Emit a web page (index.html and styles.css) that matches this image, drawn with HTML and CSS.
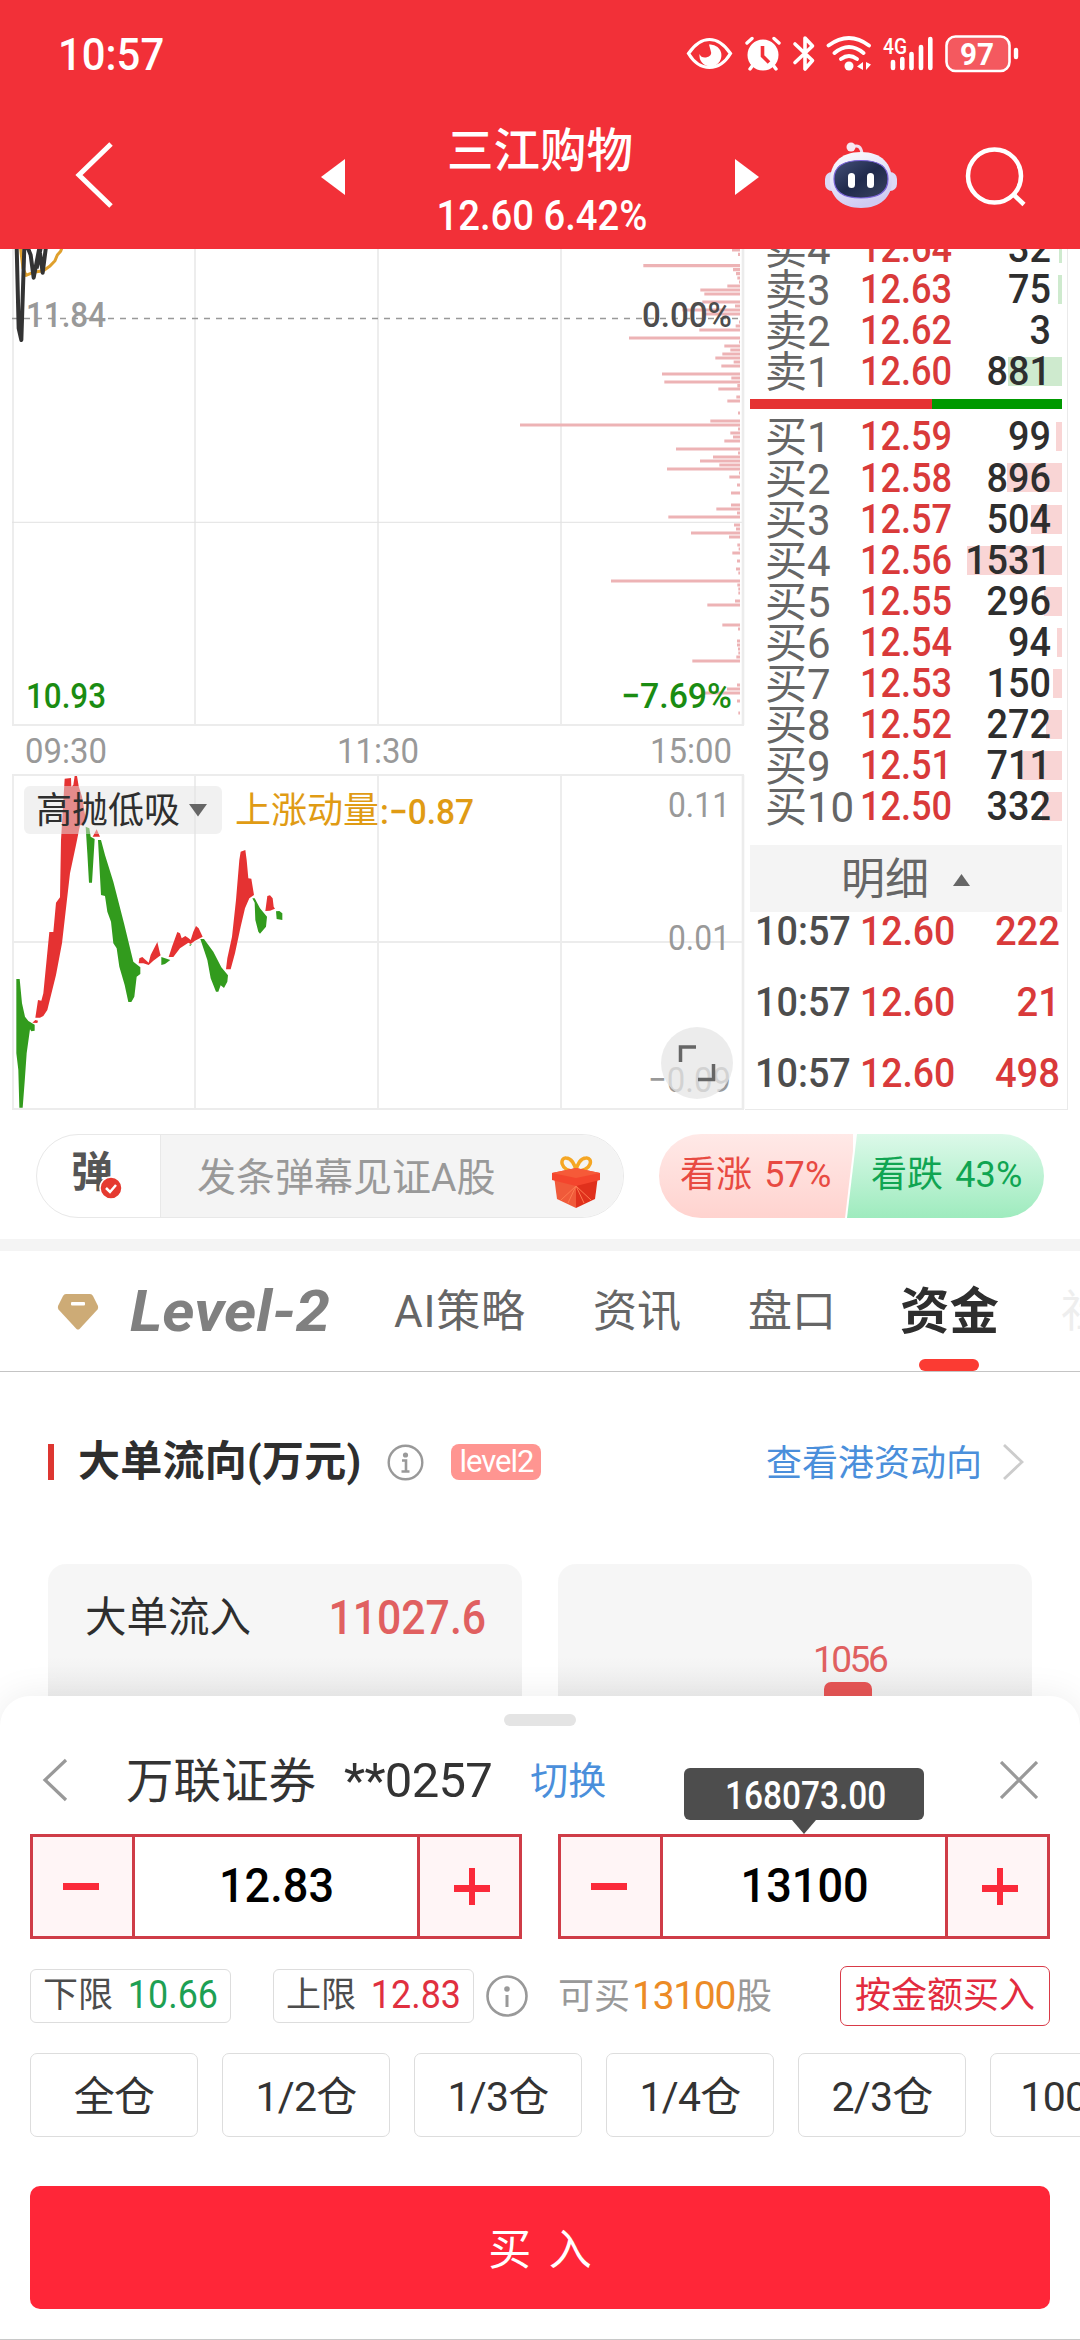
FILE: index.html
```html
<!DOCTYPE html>
<html lang="zh-CN">
<head>
<meta charset="utf-8">
<title>三江购物</title>
<link rel="stylesheet" href="styles.css">
</head>
<body>
<header class="header">
  <div class="status">
    <span class="clock">10:57</span>
    <svg class="status-icons" viewBox="684 30 340 46" width="340" height="46" fill="none" stroke="#fff">
      <path d="M688.500 53.500Q698 39.500 709.500 39.500T730.500 53.500Q722 67.500 709.500 67.500T688.500 53.500Z" stroke-width="3.200"/>
      <path d="M709 44.500A11 11 0 1 1 699.500 54Q701 58 706 57.500Q713 56 710.500 50Q709.500 46.500 709 44.500Z" fill="#fff" stroke="none"/>
      <circle cx="763" cy="55" r="15.500" fill="#fff" stroke="none"/>
      <path d="M747 43L752 38.500M779 43L774 38.500M753 65L750 69M773 65L776 69" stroke-width="3.400" stroke-linecap="round"/>
      <path d="M762.500 46V56L769 62.500" stroke="#f23038" stroke-width="3.600"/>
      <path d="M795 44L812.500 60.500L805 69V38L812.500 46L795 62.500" stroke-width="3.600" stroke-linecap="round" stroke-linejoin="round"/>
      <path d="M828.500 45.500Q849 30.500 869 45.500M834.500 53Q849 41 863.500 53M841 59Q849 53 857 59" stroke-width="3.800" stroke-linecap="round"/>
      <circle cx="849" cy="66" r="4.500" fill="#fff" stroke="none"/>
      <path d="M863 62V70L857 66.500ZM866 62V70L871 64.500Z" fill="#fff" stroke="none"/>
      <path d="M893 62V68M902.300 59V68M911.500 54V68M921 47V68M930.300 39V68" stroke-width="4.600" stroke-linecap="round"/>
      <rect x="946.500" y="36.500" width="63" height="34.500" rx="9" fill="#ffffff33" stroke-width="2.600"/>
      <path d="M1016 50V57" stroke-width="4.400" stroke-linecap="round"/>
      <g fill="#fff" stroke="none"><text x="883" y="54" font-size="22" font-weight="500" textLength="24" lengthAdjust="spacingAndGlyphs">4G</text>
      <text x="960" y="65" font-size="32" font-weight="700" textLength="34" lengthAdjust="spacingAndGlyphs">97</text></g>
    </svg>
  </div>
  <nav class="nav">
    <svg class="back" width="48" height="72" viewBox="0 0 48 72"><path d="M41 5L9 36L41 67" fill="none" stroke="#fff" stroke-width="5"/></svg>
    <svg class="prev" width="24" height="36" viewBox="0 0 24 36"><path d="M24 0V36L0 18Z" fill="#fff"/></svg>
    <div class="stock"><b class="name">三江购物</b><span class="quote">12.60 6.42%</span></div>
    <svg width="24" height="36" viewBox="0 0 24 36"><path d="M0 0V36L24 18Z" fill="#fff"/></svg>
    <svg class="robot" width="72" height="68" viewBox="0 0 72 68">
      <defs><linearGradient id="shell" x1="0" y1="0" x2=".4" y2="1"><stop offset="0" stop-color="#fff"/><stop offset="1" stop-color="#cfcbf2"/></linearGradient>
      <linearGradient id="visor" x1="0" y1="0" x2="1" y2="1"><stop offset="0" stop-color="#45517a"/><stop offset=".5" stop-color="#202a4c"/><stop offset="1" stop-color="#39435f"/></linearGradient></defs>
      <path d="M27 6Q36 2 37 13" fill="none" stroke="#f3dfee" stroke-width="3"/><circle cx="26" cy="6" r="4.500" fill="#f7e9f2"/>
      <rect x="0" y="31" width="72" height="19" rx="7" fill="#dcd9f6"/>
      <path d="M36 11C57 11 67 23 67 40C67 56 55 67 36 67S5 56 5 40C5 23 15 11 36 11Z" fill="url(#shell)"/>
      <path d="M36 19.500C55 19.500 63 26 63 38S55 57 36 57S9 50 9 38S17 19.500 36 19.500Z" fill="url(#visor)" stroke="#7a63d8" stroke-width="1.200"/>
      <rect x="23" y="32" width="7" height="15" rx="3.500" fill="#fff"/><rect x="42" y="32" width="7" height="15" rx="3.500" fill="#fff"/>
    </svg>
    <svg class="search" width="62" height="62" viewBox="0 0 62 62"><g fill="none" stroke="#fff" stroke-width="4.500"><circle cx="29.500" cy="29" r="26.500"/><path d="M48 47L59 57.500"/></g></svg>
  </nav>
</header>

<section class="market">
  <svg class="chart" width="745" height="863" viewBox="0 249 745 863">
    <g stroke="#ececec" stroke-width="1.800" fill="none">
      <path d="M13 249V725M195 249V725M378 249V725M561 249V725M12 725H744M13 775V1109M195 775V1109M378 775V1109M561 775V1109M12 775H744M12 942H744M12 1109H744"/>
      <path d="M12 522.300H744" stroke="#e2e2e2" stroke-width="1"/>
      <path d="M743 249V725M743 775V1109" stroke-width="2.600"/>
    </g>
    <path d="M12 318.500H740" stroke="#999" stroke-width="1.600" stroke-dasharray="6 6"/>
    <path transform="translate(500 240) scale(.33333)" stroke="#edb3b5" stroke-width="9.500" d="M696 30H720M714 43H720M430 77H720M699 89H720M708 101H720M712 114H720M717 126H720M682 138H720M601 150H720M613 162H720M607 186H720M705 198H720M547 210H720M613 222H720M717 246H720M707 258H720M598 270H720M387 294H720M717 306H720M673 318H720M691 330H720M667 342H720M646 354H720M701 366H720M664 378H720M486 402H720M694 414H720M493 426H720M712 437H720M655 447H720M709 471H720M682 483H720M714 519H720M631 543H720M60 555H720M714 567H720M691 579H720M699 591H720M673 603H720M528 627H720M714 639H720M639 651H720M600 663H720M658 675H720M501 687H720M717 699H720M688 711H720M711 735H720M693 759H720M693 795H720M649 807H720M711 819H720M505 831H720M702 855H720M708 867H720M573 879H720M687 891H720M712 915H720M716 927H720M697 939H720M711 963H720M708 987H720M715 999H720M333 1023H720M712 1035H720M715 1047H720M715 1059H720M705 1083H720M622 1095H720M667 1155H720M714 1167H720M711 1203H720M711 1215H720M714 1227H720M715 1239H720M709 1251H720M577 1263H720M711 1335H720M681 1347H720M606 1359H720M711 1383H720M715 1419H720"/>
    <g transform="translate(0 240) scale(.33333)" fill="none" stroke-width="9" stroke-linejoin="round">
      <path d="M61 20L69 85L78 106L100 97L130 92L150 78L165 62L172 45L182 34L187 20" stroke="#dfa02d"/>
      <path d="M50 20L56 265L64 300L73 20M82 20L92 45L101 113L118 24L128 98L138 20M110 85L122 24" stroke="#333" stroke-width="12"/>
    </g>
    <g class="axis">
      <text x="26" y="327" fill="#999" textLength="80" lengthAdjust="spacingAndGlyphs">11.84</text>
      <text x="642" y="327" fill="#4d4d4d" textLength="90" lengthAdjust="spacingAndGlyphs">0.00%</text>
      <text x="26" y="708" fill="#1a8c12" textLength="80" lengthAdjust="spacingAndGlyphs">10.93</text>
      <text x="621" y="708" fill="#1a8c12" textLength="111" lengthAdjust="spacingAndGlyphs">−7.69%</text>
      <text class="gray" x="25" y="763" textLength="82" lengthAdjust="spacingAndGlyphs">09:30</text>
      <text class="gray" x="337" y="763" textLength="82" lengthAdjust="spacingAndGlyphs">11:30</text>
      <text class="gray" x="650" y="763" textLength="82" lengthAdjust="spacingAndGlyphs">15:00</text>
      <text class="gray" x="668" y="817" textLength="62" lengthAdjust="spacingAndGlyphs">0.11</text>
      <text class="gray" x="668" y="950" textLength="62" lengthAdjust="spacingAndGlyphs">0.01</text>
      <text class="gray" x="648" y="1092" textLength="83" lengthAdjust="spacingAndGlyphs">−0.09</text>
    </g>
    <g transform="translate(0 720) scale(.33333)">
      <path fill="#e53232" d="M97 908L106 900L114 902L112 909ZM106 893L114 840L124 842L130 820L148 636L160 636L168 548L180 532L183 360L194 176L213 174L214 200L220 195L224 168L231 168L236 198L246 230L258 300L250 316L240 316L228 375L210 460L186 670L168 765L142 870L130 888L120 893ZM278 350L290 328L300 350ZM416 730L418 715L427 711L446 728L452 705L472 666L480 700L482 706L460 722L446 735L430 730ZM506 711L516 680L532 636L540 640L545 655L556 648L566 655L572 660L580 635L588 618L596 625L608 650L585 662L572 672L565 668L540 685L520 711ZM678 748L682 715L696 650L708 540L718 420L722 395L736 390L740 420L745 475L754 476L762 525L748 535L735 565L722 620L705 700L692 748ZM796 573L802 528L810 526L818 535L821 560L825 566L810 572Z"/>
      <path fill="#329b1d" d="M49 777L59 777L66 850L75 890L85 903L104 914L104 932L94 934L90 928L80 1000L74 1085L68 1163L58 1163L55 1050L49 1000ZM257 320L268 325L272 350L284 357L276 488L267 488L262 400ZM294 360L303 360L315 405L340 485L372 610L400 725L421 742L421 762L410 770L403 830L394 846L385 846L374 795L358 740L350 685L340 670L333 605L322 575L315 528L303 525ZM484 711L511 720L495 732L484 735ZM568 674L576 672L570 679ZM601 657L612 657L640 695L664 742L684 766L682 785L672 804L662 796L655 815L648 815L632 775L622 720ZM757 535L764 535L780 565L801 590L798 620L780 641L775 635L766 600L764 548ZM828 574L838 573L847 580L847 600L830 597Z"/>
    </g>
    <rect x="24" y="786" width="198" height="48" rx="6" fill="#e3e3e3" opacity=".5"/>
    <text x="36" y="823" font-size="36" fill="#2e2e2e">高抛低吸</text>
    <path d="M189 804H207L198 816.500Z" fill="#666"/>
    <text x="235" y="823" font-size="36" fill="#e09b14">上涨动量</text>
    <text class="axis" x="380" y="824" fill="#e09b14" textLength="94" lengthAdjust="spacingAndGlyphs">:−0.87</text>
    <circle cx="697" cy="1063" r="36" fill="#e6e6e6" opacity=".75"/>
    <path d="M680.500 1062V1047H696M698 1079.500H713.500V1064" fill="none" stroke="#666" stroke-width="3.500"/>
  </svg>

  <aside class="book">
    <div class="asks">
      <div class="level"><span>卖4</span><b>12.64</b><i>32</i><u class="g" style="width:3px"></u></div>
      <div class="level"><span>卖3</span><b>12.63</b><i>75</i><u class="g" style="width:4px"></u></div>
      <div class="level"><span>卖2</span><b>12.62</b><i>3</i></div>
      <div class="level"><span>卖1</span><b>12.60</b><i>881</i><u class="g" style="width:54px"></u></div>
    </div>
    <div class="ratio"><div style="width:58.200%"></div></div>
    <div class="bids">
      <div class="level"><span>买1</span><b>12.59</b><i>99</i><u style="width:6px"></u></div>
      <div class="level"><span>买2</span><b>12.58</b><i>896</i><u style="width:55px"></u></div>
      <div class="level"><span>买3</span><b>12.57</b><i>504</i><u style="width:31px"></u></div>
      <div class="level"><span>买4</span><b>12.56</b><i>1531</i><u style="width:95px"></u></div>
      <div class="level"><span>买5</span><b>12.55</b><i>296</i><u style="width:18px"></u></div>
      <div class="level"><span>买6</span><b>12.54</b><i>94</i><u style="width:5px"></u></div>
      <div class="level"><span>买7</span><b>12.53</b><i>150</i><u style="width:9px"></u></div>
      <div class="level"><span>买8</span><b>12.52</b><i>272</i><u style="width:16px"></u></div>
      <div class="level"><span>买9</span><b>12.51</b><i>711</i><u style="width:42px"></u></div>
      <div class="level"><span>买10</span><b>12.50</b><i>332</i><u style="width:20px"></u></div>
    </div>
    <div class="detail">明细<svg width="17" height="12" viewBox="0 0 17 12"><path d="M8.500 0L17 12H0Z" fill="#666"/></svg></div>
    <div class="ticks">
      <div class="tick"><span>10:57</span><b>12.60</b><i>222</i></div>
      <div class="tick"><span>10:57</span><b>12.60</b><i>21</i></div>
      <div class="tick"><span>10:57</span><b>12.60</b><i>498</i></div>
    </div>
  </aside>
</section>

<section class="social">
  <div class="danmu">
    <div class="danmu-toggle">弹<svg class="check" width="24" height="24" viewBox="0 0 24 24"><circle cx="12" cy="12" r="11" fill="#e53a30" stroke="#fff" stroke-width="1.500"/><path d="M7 12L11 16L17 9" fill="none" stroke="#fff" stroke-width="2.500"/></svg></div>
    <div class="danmu-input">发条弹幕见证A股
      <svg width="50" height="52" viewBox="0 0 50 52">
        <path d="M24 15C8 15 9 1 15 2C20 2 24 8 25 15C26 8 30 2 35 2C42 1 42 15 25 15" fill="none" stroke="#f5a623" stroke-width="3.500"/>
        <path d="M3 20L25 25V52L6 43Z" fill="#f05a3a"/><path d="M47 20L25 25V52L44 43Z" fill="#e0301c"/>
        <path d="M1 17L25 12L49 17V24L25 30L1 24Z" fill="#f4452d"/><path d="M1 17L25 22L49 17L25 12Z" fill="#f65a38"/>
        <path d="M25 30L17 47M25 30L33 47M25 30L10 44M25 30L40 44" stroke="#ff7a50" stroke-width="1"/>
      </svg>
    </div>
  </div>
  <div class="votes"><div class="up">看涨 57%</div><div class="down">看跌 43%</div></div>
</section>

<nav class="tabs">
  <svg class="gem" width="42" height="42" viewBox="0 0 42 42"><path d="M9 3H33Q35 3 36 5L41 15Q41.500 17 40.500 18.500L22.500 38Q21 39 19.500 38L1.500 18.500Q.5 17 1 15L6 5Q7 3 9 3Z" fill="#cdab76"/><rect x="14" y="11" width="14" height="3.500" rx="1" fill="#fff"/></svg>
  <svg class="level-two" width="204" height="50" viewBox="0 0 204 50"><text x="2" y="44" font-size="58" font-weight="700" font-style="italic" fill="#808080" textLength="200" lengthAdjust="spacingAndGlyphs">Level-2</text></svg>
  <a class="t1">AI策略</a><a class="t2">资讯</a><a class="t3">盘口</a><a class="t4 on">资金</a><a class="t5">社区</a>
</nav>

<section class="flow">
  <div class="flow-head">
    <h2>大单流向(万元)</h2>
    <svg width="37" height="37" viewBox="0 0 37 37"><circle cx="18.500" cy="18.500" r="16.800" fill="none" stroke="#999" stroke-width="2.400"/><circle cx="18.500" cy="11" r="2.600" fill="#999"/><path d="M15 16.500H19V27M14.500 27.500H22.500" fill="none" stroke="#999" stroke-width="2.600"/></svg>
    <span class="badge">level2</span>
    <a class="link">查看港资动向</a>
    <svg class="more" width="22" height="36" viewBox="0 0 22 36"><path d="M2 1L20 18L2 35" fill="none" stroke="#ccc" stroke-width="2.800"/></svg>
  </div>
  <div class="cards">
    <div class="card inflow"><span>大单流入</span><b>11027.6</b></div>
    <div class="card bars"><div class="column"><span>1056</span><div></div></div></div>
  </div>
</section>

<section class="sheet">
  <div class="handle"></div>
  <div class="account">
    <svg width="26" height="44" viewBox="0 0 26 44"><path d="M24 2L3 22L24 42" fill="none" stroke="#999" stroke-width="3.200"/></svg>
    <span class="broker">万联证券</span><span class="acct">**0257</span><a class="switch">切换</a>
    <svg class="close" width="38" height="38" viewBox="0 0 38 38"><path d="M1 1L37 37M37 1L1 37" fill="none" stroke="#999" stroke-width="3.200"/></svg>
  </div>
  <div class="steppers">
    <div class="stepper"><div class="minus"></div><strong><span>12.83</span></strong><div class="plus"></div></div>
    <div class="stepper"><div class="minus"></div><strong><span>13100</span></strong><div class="plus"></div><div class="tip"><span>168073.00</span></div></div>
  </div>
  <div class="limits">
    <div class="limit low">下限<b>10.66</b></div>
    <div class="limit high">上限<b>12.83</b></div>
    <svg width="42" height="42" viewBox="0 0 42 42"><circle cx="21" cy="21" r="19.500" fill="none" stroke="#999" stroke-width="2.600"/><circle cx="21" cy="14" r="2.800" fill="#999"/><path d="M21 20V32" stroke="#999" stroke-width="3"/></svg>
    <span class="can">可买<b>13100</b>股</span>
    <button class="by-amount">按金额买入</button>
  </div>
  <div class="positions"><button>全仓</button><button>1/2仓</button><button>1/3仓</button><button>1/4仓</button><button>2/3仓</button><button>100股</button></div>
  <button class="buy">买 入</button>
</section>
</body>
</html>
```
FILE: styles.css
```css
* { box-sizing: border-box; }
body {
  margin: 0;
  width: 1080px;
  height: 2340px;
  overflow: hidden;
  background: #fff;
  color: #333;
  font-family: Roboto, "Noto Sans CJK SC", sans-serif;
  display: flex;
  flex-direction: column;
}
svg { display: block; flex: none; }
b, i, u, strong { font-weight: 500; font-style: normal; text-decoration: none; }
button { font: inherit; background: #fff; padding: 0; margin: 0; display: block; }

.header { height: 249px; background: #f23038; color: #fff; flex: none; }
.status { height: 108px; display: flex; justify-content: space-between; padding: 30px 56px 0 58px; }
.clock { font-size: 45px; line-height: 49px; font-weight: 500; transform: scaleX(.93); transform-origin: left; }
.nav { height: 141px; display: flex; align-items: flex-start; }
.back { margin: 31px 0 0 70px; }
.prev { margin-left: 203px; }
.nav > svg:nth-child(2), .nav > svg:nth-child(4) { margin-top: 51px; }
.stock { width: 390px; display: flex; flex-direction: column; align-items: center; padding-top: 16px; }
.name { font-size: 46.500px; line-height: 54px; }
.quote { font-size: 42px; line-height: 48px; font-weight: 500; margin: 14px 0 0 4px; transform: scaleX(.91); }
.robot { margin: 33px 0 0 66px; }
.search { margin: 39px 0 0 68px; }

.market { height: 863px; display: flex; flex: none; overflow: hidden; }
.axis text, text.axis { font-size: 35.500px; font-weight: 500; }
.axis .gray { fill: #999; font-weight: 400; }
.book { width: 323px; height: 861px; border: solid #eaeaea; border-width: 0 1px 1px 0; padding: 0 5px; }
.asks { margin-top: -22px; }
.level { height: 41.100px; position: relative; display: flex; align-items: center; white-space: nowrap; }
.level > * { position: relative; z-index: 1; }
.level span { width: 110px; margin-top: -4px; padding-left: 15px; font-size: 42px; color: #666; flex: none; }
.level b, .tick b { color: #d93a3a; font-size: 41.500px; width: 95px; flex: none; transform: scaleX(.87); transform-origin: left; }
.level i { color: #2e2e2e; font-size: 41.500px; flex: 1; text-align: right; margin-right: 11px; transform: scaleX(.91); transform-origin: right; }
.level u { position: absolute; z-index: 0; right: 0; top: 7px; height: 29px; background: #f9d5d5; }
.level u.g { background: #ceeace; }
.ratio { height: 10px; margin: 8px 0 6px; background: #090; }
.ratio div { height: 10px; background: #e53232; }
.detail { height: 67px; margin-top: 19px; background: #f4f4f4; color: #666; font-size: 44px; line-height: 64px; display: flex; align-items: center; padding: 3px 0 0 91px; gap: 24px; }
.ticks { margin-top: -17px; }
.tick { height: 71px; display: flex; align-items: center; padding-left: 5px; }
.tick span { width: 105px; font-size: 41.500px; font-weight: 500; color: #4d4d4d; transform: scaleX(.91); transform-origin: left; }
.tick b { transform: scaleX(.9); }
.tick i { flex: 1; text-align: right; font-size: 41.500px; color: #d93a3a; margin-right: 2px; transform: scaleX(.92); transform-origin: right; }

.social { height: 139px; border-bottom: 12px solid #f4f4f4; padding: 22px 36px 0; display: flex; justify-content: space-between; flex: none; }
.danmu { width: 588px; height: 84px; border: 1px solid #e8e8e8; border-radius: 42px; display: flex; overflow: hidden; }
.danmu-toggle { width: 124px; border-right: 1px solid #e8e8e8; position: relative; font-size: 42px; line-height: 76px; font-weight: 700; color: #555; padding-left: 34px; }
.check { position: absolute; left: 62px; top: 41px; }
.danmu-input { flex: 1; background: #f4f4f4; color: #999; font-size: 39px; display: flex; align-items: center; justify-content: space-between; padding: 0 22px 5px 36px; }
.danmu-input svg { margin-top: 17px; }
.votes { width: 385px; height: 84px; display: flex; border-radius: 42px; overflow: hidden; font-size: 36px; line-height: 83px; white-space: nowrap; letter-spacing: .1px; word-spacing: 3px; }
.up { width: 196px; padding-left: 21px; color: #e84a42; background: linear-gradient(#ffe9e7, #ffd3cf); clip-path: polygon(0 0, 196px 0, 186px 100%, 0 100%); }
.down { width: 199px; margin-left: -6px; padding-left: 24px; color: #10a552; background: linear-gradient(#dcf9e9, #9eebbe); clip-path: polygon(10px 0, 100% 0, 100% 100%, 0 100%); }

.tabs { height: 121px; border-bottom: 1px solid #c4c4c4; display: flex; flex: none; font-size: 44px; line-height: 122px; color: #666; white-space: nowrap; overflow: hidden; }
.tabs a { flex: none; }
.gem { margin: 40px 0 0 57px; }
.level-two { margin: 36px 0 0 29px; }
.tabs .t1 { margin-left: 62px; width: 199px; letter-spacing: .8px; }
.t2 { width: 155px; }
.t3 { width: 152px; }
.t4 { width: 161px; }
.t4.on { font-size: 49.500px; font-weight: 700; color: #2e2e2e; position: relative; }
.t4.on::after { content: ""; position: absolute; left: 19px; top: 108px; width: 60px; height: 12px; border-radius: 6px; background: #fb3b33; }
.t5 { color: #eee; }

.flow { height: 324px; flex: none; }
.flow-head { height: 180px; display: flex; align-items: center; padding: 0 56px 0 48px; }
.flow-head h2 { margin: 0 26px 0 0; font-size: 42px; line-height: 36px; font-weight: 700; color: #2e2e2e; border-left: 6px solid #dd3631; padding-left: 24px; letter-spacing: .25px; }
.badge { margin-left: 27px; width: 90px; height: 36px; border-radius: 8px; background: #ff9591; color: #fff; font-size: 31px; line-height: 35px; text-align: center; letter-spacing: -1px; }
.link { margin: -4px 0 0 auto; font-size: 36px; color: #4a8fdb; }
.more { margin-left: 20px; }
.cards { display: flex; gap: 36px; padding: 12px 48px 0; }
.card { width: 474px; height: 132px; border-radius: 18px 18px 0 0; background: linear-gradient(#f6f6f6 70%, #eee); display: flex; justify-content: space-between; }
.inflow { padding: 27px 36px 0 37px; font-size: 41.500px; line-height: 54px; color: #2e2e2e; }
.inflow b { color: #e06060; font-size: 48px; transform: scaleX(.89); transform-origin: right; }
.bars { padding-left: 255px; }
.column { font-size: 37px; line-height: 36px; color: #e06060; padding-top: 78px; letter-spacing: -2.500px; }
.column div { width: 48px; height: 14px; margin: 4px 0 0 11px; border-radius: 7px 7px 0 0; background: #e65555; }

.sheet { height: 644px; flex: none; position: relative; background: #fff; border-bottom: 1px solid #c8c8c8; border-radius: 30px 30px 0 0; box-shadow: 0 0 36px rgba(0,0,0,.08); padding: 18px 30px 0; }
.handle { width: 72px; height: 12px; border-radius: 6px; background: #e4e4e4; margin: 0 auto; }
.account { height: 108px; display: flex; align-items: center; padding: 0 12px; }
.broker { font-size: 47.500px; margin: -5px 0 0 58px; }
.acct { font-size: 49px; margin-left: 28px; letter-spacing: -.7px; }
.switch { font-size: 38px; color: #4a8fdb; margin: -5px 0 0 38px; }
.close { margin-left: auto; }
.steppers { display: flex; justify-content: space-between; }
.stepper { width: 492px; height: 105px; border: 3px solid #cf3c47; display: flex; position: relative; }
.minus, .plus { width: 99px; background: linear-gradient(#fb2a3a, #fb2a3a) 30px 46px / 36px 7px no-repeat, #fff5f6; }
.plus { background: linear-gradient(#fb2a3a, #fb2a3a) 34px 48px / 36px 7px no-repeat, linear-gradient(#fb2a3a, #fb2a3a) 49px 31px / 6px 37px no-repeat, #fff5f6; }
.stepper strong { flex: 1; border: solid #cf3c47; border-width: 0 3px; text-align: center; font-size: 49px; line-height: 97px; color: #000; }
.stepper strong span { display: inline-block; transform: translateX(1px) scaleX(.92); }
.tip { position: absolute; left: 123px; top: -69px; width: 240px; height: 52px; border-radius: 6px; background: #4d4d4d; color: #fff; font-size: 38px; line-height: 57px; font-weight: 500; text-align: center; }
.tip span { display: inline-block; transform: translateX(2px) scaleX(.88); }
.tip::after { content: ""; position: absolute; left: 108px; top: 52px; border: solid transparent; border-width: 14px 12px 0; border-top-color: #4d4d4d; }
.limits { height: 60px; margin-top: 27px; display: flex; align-items: center; font-size: 36px; line-height: 52px; }
.limit { width: 201px; height: 54px; border: 1px solid #ddd; border-radius: 6px; color: #4d4d4d; display: flex; justify-content: space-between; padding: 0 12px; font-size: 35px; line-height: 51px; }
.limit b { font-size: 39px; font-weight: 400; transform: scaleX(.92); transform-origin: right; }
.low b { color: #1ea053; }
.high b { color: #e0303f; }
.high { margin: 0 12px 0 42px; }
.can { color: #999; margin-left: 30px; }
.can b { color: #ec8b26; font-size: 39px; letter-spacing: -1.300px; font-weight: 400; margin: 0 1px 0 2px; }
.by-amount { margin-left: auto; width: 210px; height: 60px; border: 1px solid #d93a48; border-radius: 7px; color: #e22c3f; font-size: 36px; line-height: 56px; white-space: nowrap; }
.positions { display: flex; gap: 24px; margin: 27px -30px 0 0; overflow: hidden; }
.positions button { flex: 0 0 168px; height: 84px; border: 1px solid #ddd; border-radius: 7px; color: #333; font-size: 41px; letter-spacing: -.7px; padding-bottom: 5px; }
.buy { width: 1020px; height: 123px; margin-top: 49px; border: 0; border-radius: 10px; background: #ff2638; color: #fff; font-size: 43px; word-spacing: 7px; padding-bottom: 3px; }
```
